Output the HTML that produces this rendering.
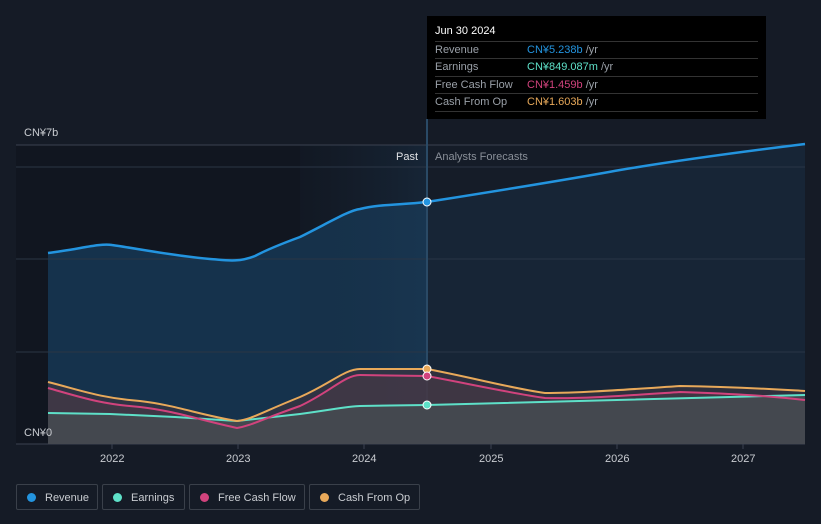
<!DOCTYPE html>
<html><head><meta charset="utf-8"><style>
body{margin:0;width:821px;height:524px;background:#151b26;font-family:"Liberation Sans",sans-serif;overflow:hidden;position:relative}
.tt{position:absolute;left:427px;top:16px;width:339px;height:103px;background:#000;color:#fff;font-size:11px}
.tt .h{position:absolute;left:8px;top:9px;font-size:11px}
.row{position:absolute;left:8px;width:323px;height:17px;border-top:1px solid #333;line-height:17px;color:#9aa0a8}
.row span{position:absolute;left:92px}
.leg{position:absolute;top:484px;height:26px;border:1px solid #3a404a;border-radius:2px;color:#c9ccd1;font-size:11px;line-height:26px;box-sizing:border-box;padding-left:28px}
.leg i{position:absolute;left:10px;top:8px;width:9px;height:9px;border-radius:50%}
</style></head><body>
<svg width="821" height="524" style="position:absolute;left:0;top:0">
<defs>
<linearGradient id="hb" x1="0" x2="1"><stop offset="0" stop-color="#1a2a3c" stop-opacity="0.2"/><stop offset="1" stop-color="#1d3a55" stop-opacity="0.7"/></linearGradient>
<clipPath id="past"><rect x="0" y="0" width="427" height="524"/></clipPath>
<clipPath id="fut"><rect x="427" y="0" width="400" height="524"/></clipPath>
</defs>
<rect x="16" y="145" width="411" height="299" fill="#111620"/>
<rect x="427" y="145" width="378" height="299" fill="#151c28"/>
<g id="rf">
<path clip-path="url(#past)" d="M48,253 C80,249 100,243 112,245 C140,249 175,256 210,259 C225,260 237,263 255,256 C270,248 300,237 300,237 C330,222 350,210 360,209 C380,204 400,205 427,202 L427,444 L48,444Z" fill="#15324c"/>
<path clip-path="url(#fut)" d="M427,202 C490,192 560,181 620,170 C680,160 740,152 805,144 L805,444 L427,444Z" fill="#172536"/>
</g>
<rect x="300" y="145" width="127" height="299" fill="url(#hb)" opacity="0.6"/>
<g stroke="#2a3545" stroke-width="1"><line x1="16" y1="167" x2="805" y2="167"/><line x1="16" y1="259" x2="805" y2="259"/><line x1="16" y1="352" x2="805" y2="352"/></g>
<line x1="16" y1="145" x2="805" y2="145" stroke="#3a4250"/>
<line x1="16" y1="444" x2="805" y2="444" stroke="#3a4250"/>
<g stroke="#3a4250"><line x1="112" y1="444" x2="112" y2="449"/><line x1="238" y1="444" x2="238" y2="449"/><line x1="364" y1="444" x2="364" y2="449"/><line x1="491" y1="444" x2="491" y2="449"/><line x1="617" y1="444" x2="617" y2="449"/><line x1="743" y1="444" x2="743" y2="449"/></g>
<line x1="427" y1="119" x2="427" y2="444" stroke="#2a4a66" stroke-width="2"/>
<path d="M48,382 C80,390 100,398 140,401 C175,405 200,415 237,421 C250,420 260,413 300,397 C330,384 345,369 360,369 L427,369 C470,377 510,388 545,393 C580,393 620,390 680,386 C740,387 770,389 805,391 L805,444 L48,444Z" fill="#3a3540" fill-opacity="0.7"/>
<path d="M48,388 C80,397 100,404 140,407 C175,411 200,420 237,428 C250,426 260,420 300,406 C330,392 345,375 360,375 L427,376 C470,384 510,393 545,398 C580,399 620,396 680,392 C740,394 770,396 805,400 L805,444 L48,444Z" fill="#4a3a48" fill-opacity="0.6"/>
<path d="M48,413 L110,414 L175,417 L237,421 L300,414 C330,410 350,406 360,406 L427,405 L805,395 L805,444 L48,444Z" fill="#44484f"/>
<path d="M48,413 L110,414 L175,417 L237,421 L300,414 C330,410 350,406 360,406 L427,405 L805,395" fill="none" stroke="#5ee0c8" stroke-width="2"/>
<path d="M48,388 C80,397 100,404 140,407 C175,411 200,420 237,428 C250,426 260,420 300,406 C330,392 345,375 360,375 L427,376 C470,384 510,393 545,398 C580,399 620,396 680,392 C740,394 770,396 805,400" fill="none" stroke="#d1437d" stroke-width="2"/>
<path d="M48,382 C80,390 100,398 140,401 C175,405 200,415 237,421 C250,420 260,413 300,397 C330,384 345,369 360,369 L427,369 C470,377 510,388 545,393 C580,393 620,390 680,386 C740,387 770,389 805,391" fill="none" stroke="#e8a95a" stroke-width="2"/>
<path d="M48,253 C80,249 100,243 112,245 C140,249 175,256 210,259 C225,260 237,263 255,256 C270,248 300,237 300,237 C330,222 350,210 360,209 C380,204 400,205 427,202 C490,192 560,181 620,170 C680,160 740,152 805,144" fill="none" stroke="#2394df" stroke-width="2.5"/>
<circle cx="427" cy="202" r="4" fill="#2394df" stroke="#fff" stroke-width="1"/>
<circle cx="427" cy="369" r="4" fill="#e8a95a" stroke="#fff" stroke-width="1"/>
<circle cx="427" cy="376" r="4" fill="#d1437d" stroke="#fff" stroke-width="1"/>
<circle cx="427" cy="405" r="4" fill="#5ee0c8" stroke="#fff" stroke-width="1"/>
<g font-family="Liberation Sans" font-size="11" fill="#c9ccd1">
<text x="24" y="136">CN¥7b</text><text x="24" y="436">CN¥0</text>
<text x="396" y="160" fill="#e0e2e5">Past</text><text x="435" y="160" fill="#8a9099">Analysts Forecasts</text>
<text x="100" y="462">2022</text><text x="226" y="462">2023</text><text x="352" y="462">2024</text><text x="479" y="462">2025</text><text x="605" y="462">2026</text><text x="731" y="462">2027</text>
</g>
</svg>
<div class="tt"><div class="h">Jun 30 2024</div>
<div class="row" style="top:25px">Revenue<span style="color:#2394df">CN¥5.238b <b style="font-weight:normal;color:#9aa0a8">/yr</b></span></div>
<div class="row" style="top:42px">Earnings<span style="color:#5ee0c8">CN¥849.087m <b style="font-weight:normal;color:#9aa0a8">/yr</b></span></div>
<div class="row" style="top:60px">Free Cash Flow<span style="color:#d1437d">CN¥1.459b <b style="font-weight:normal;color:#9aa0a8">/yr</b></span></div>
<div class="row" style="top:77px;border-bottom:1px solid #333">Cash From Op<span style="color:#e8a95a">CN¥1.603b <b style="font-weight:normal;color:#9aa0a8">/yr</b></span></div>
</div>
<div class="leg" style="left:16px;width:82px"><i style="background:#2394df"></i>Revenue</div>
<div class="leg" style="left:102px;width:83px"><i style="background:#5ee0c8"></i>Earnings</div>
<div class="leg" style="left:189px;width:116px"><i style="background:#d1437d"></i>Free Cash Flow</div>
<div class="leg" style="left:309px;width:111px"><i style="background:#e8a95a"></i>Cash From Op</div>
</body></html>
